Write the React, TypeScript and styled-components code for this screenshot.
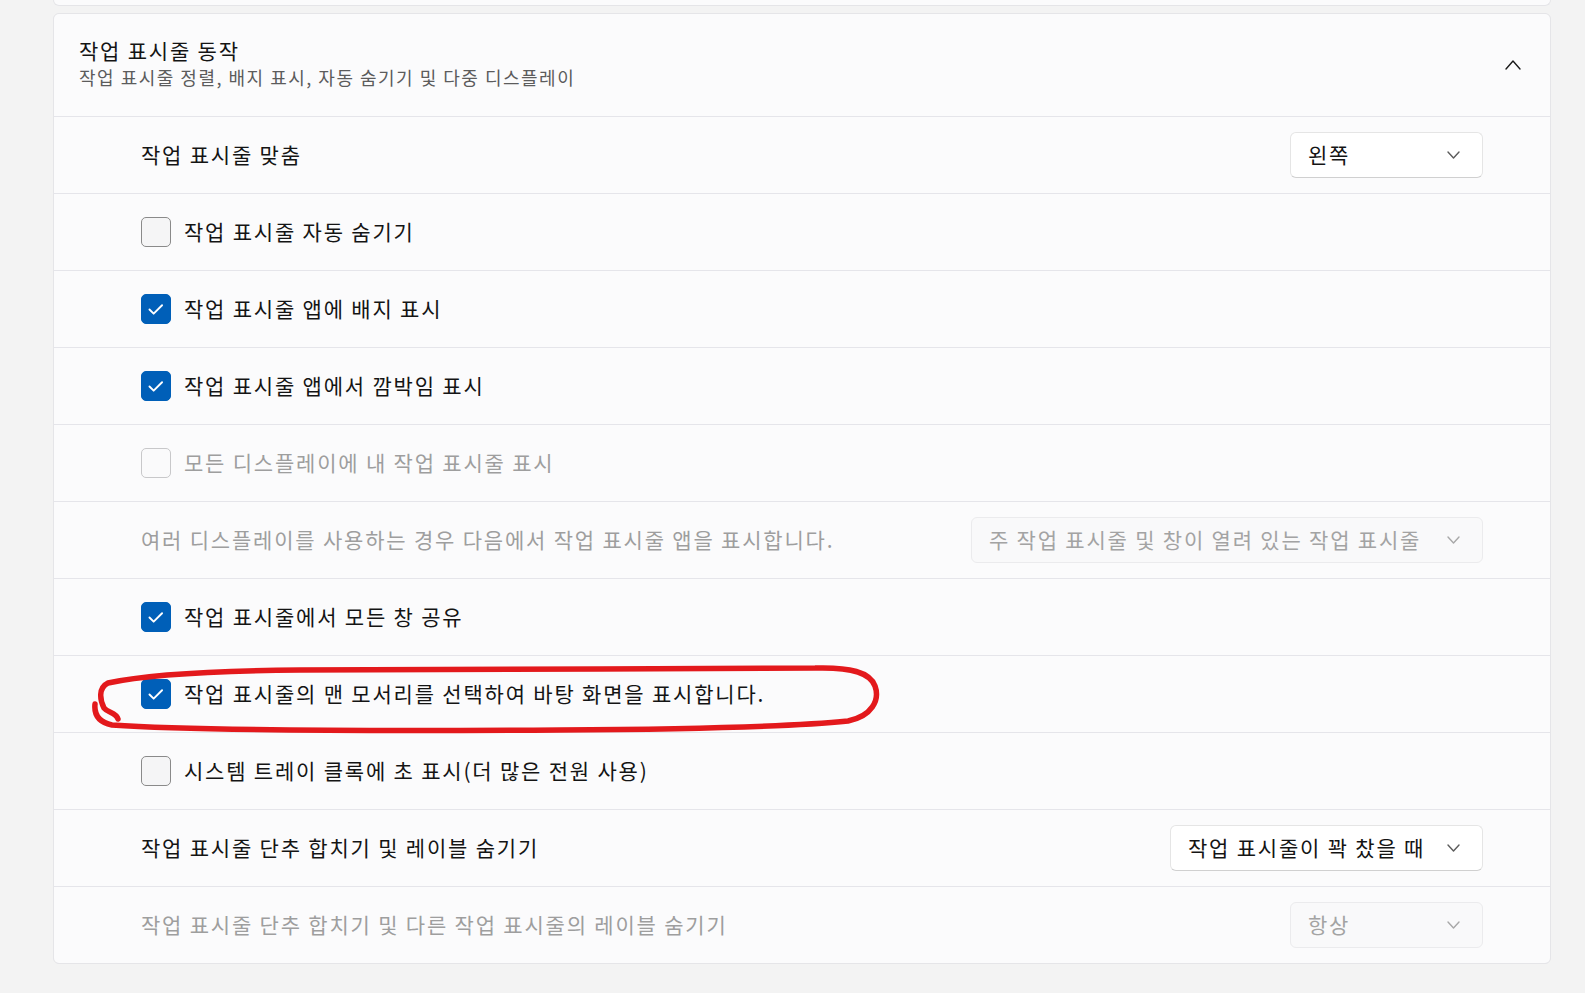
import React from "react";
import styled, { createGlobalStyle } from "styled-components";

const GlobalStyle = createGlobalStyle`
  body {
    margin: 0;
    background: #f3f3f3;
    font-family: "Noto Sans CJK KR", "Noto Sans", sans-serif;
    color: #141414;
  }
`;

const Page = styled.div`
  position: relative;
  height: 993px;
  overflow: hidden;
  padding: 0 34px 0 53px;
  box-sizing: border-box;
  display: flex;
  flex-direction: column;
`;

// bottom edge of the card scrolled up above
const PrevCard = styled.div`
  height: 5px;
  border: 1px solid #e5e5e8;
  border-top: none;
  border-radius: 0 0 6px 6px;
  background: #fbfbfc;
`;

const Card = styled.div`
  margin-top: 7px;
  border: 1px solid #e5e5e8;
  border-radius: 6px;
  background: #e5e5ea;
  display: flex;
  flex-direction: column;
  gap: 1px;
  overflow: hidden;
`;

const Header = styled.div`
  height: 102px;
  display: flex;
  align-items: center;
  justify-content: space-between;
  padding: 0 29px 0 25px;
  background: #fbfbfc;
`;

const HeaderText = styled.div`
  display: flex;
  flex-direction: column;
  margin-bottom: 4px;
`;

const Title = styled.div`
  font-size: 21px;
  line-height: 28px;
  letter-spacing: 1.8px;
  color: #141414;
`;

const Subtitle = styled.div`
  font-size: 18px;
  line-height: 26px;
  letter-spacing: 1.5px;
  color: #5c5c5c;
`;

const Row = styled.div`
  height: 76px;
  display: flex;
  align-items: center;
  justify-content: space-between;
  padding: 0 67px 0 87px;
  background: #fbfbfc;
`;

const LabelGroup = styled.div`
  display: flex;
  align-items: center;
  gap: 13px;
`;

const Label = styled.span<{ $disabled?: boolean }>`
  font-size: 21px;
  line-height: 30px;
  letter-spacing: 1.8px;
  margin-bottom: 3px;
  color: ${(p) => (p.$disabled ? "#9e9e9e" : "#141414")};
  white-space: nowrap;
`;

const Box = styled.span<{ $checked?: boolean; $disabled?: boolean }>`
  width: 30px;
  height: 30px;
  box-sizing: border-box;
  border-radius: 5px;
  display: flex;
  align-items: center;
  justify-content: center;
  background: ${(p) => (p.$checked ? "#005fb8" : p.$disabled ? "#fafafb" : "#f5f5f6")};
  border: 1px solid
    ${(p) => (p.$checked ? "#005fb8" : p.$disabled ? "#c8c8ca" : "#8a8a8a")};
`;

const Select = styled.div<{ $width: number; $disabled?: boolean }>`
  width: ${(p) => p.$width}px;
  height: 46px;
  box-sizing: border-box;
  display: flex;
  align-items: center;
  justify-content: space-between;
  padding: 0 22px 0 17px;
  border-radius: 6px;
  border: 1px solid ${(p) => (p.$disabled ? "#ebebed" : "#e5e5e5")};
  border-bottom-color: ${(p) => (p.$disabled ? "#ebebed" : "#d0d0d0")};
  background: ${(p) => (p.$disabled ? "#f9f9fa" : "#ffffff")};
  font-size: 21px;
  letter-spacing: 1.8px;
  color: ${(p) => (p.$disabled ? "#a3a3a3" : "#141414")};
  white-space: nowrap;

  span {
    margin-bottom: 3px;
  }
`;

const Annotation = styled.svg`
  position: absolute;
  left: 0;
  top: 0;
  pointer-events: none;
`;

const Chevron = ({ up, color, w, h }: { up?: boolean; color: string; w: number; h: number }) => (
  <svg width={w} height={h + 2} viewBox={`0 0 ${w} ${h + 2}`}>
    <polyline
      points={up ? `1,${h + 1} ${w / 2},1 ${w - 1},${h + 1}` : `1,1 ${w / 2},${h + 1} ${w - 1},1`}
      fill="none"
      stroke={color}
      strokeWidth={1.4}
      strokeLinecap="round"
      strokeLinejoin="round"
    />
  </svg>
);

const Checkbox = ({ checked, disabled }: { checked?: boolean; disabled?: boolean }) => (
  <Box $checked={checked} $disabled={disabled}>
    {checked && (
      <svg width="30" height="30" viewBox="0 0 30 30">
        <polyline
          points="8,15.5 12.5,20 21.5,11"
          fill="none"
          stroke="#ffffff"
          strokeWidth={2}
          strokeLinecap="round"
          strokeLinejoin="round"
        />
      </svg>
    )}
  </Box>
);

const Dropdown = ({ value, width, disabled }: { value: string; width: number; disabled?: boolean }) => (
  <Select $width={width} $disabled={disabled}>
    <span>{value}</span>
    <Chevron color={disabled ? "#a8a8a8" : "#5c5c5c"} w={13} h={6} />
  </Select>
);

interface Setting {
  label: string;
  check?: boolean;
  checked?: boolean;
  disabled?: boolean;
  select?: { value: string; width: number };
}

const settings: Setting[] = [
  { label: "작업 표시줄 맞춤", select: { value: "왼쪽", width: 193 } },
  { label: "작업 표시줄 자동 숨기기", check: true },
  { label: "작업 표시줄 앱에 배지 표시", check: true, checked: true },
  { label: "작업 표시줄 앱에서 깜박임 표시", check: true, checked: true },
  { label: "모든 디스플레이에 내 작업 표시줄 표시", check: true, disabled: true },
  {
    label: "여러 디스플레이를 사용하는 경우 다음에서 작업 표시줄 앱을 표시합니다.",
    disabled: true,
    select: { value: "주 작업 표시줄 및 창이 열려 있는 작업 표시줄", width: 512 },
  },
  { label: "작업 표시줄에서 모든 창 공유", check: true, checked: true },
  { label: "작업 표시줄의 맨 모서리를 선택하여 바탕 화면을 표시합니다.", check: true, checked: true },
  { label: "시스템 트레이 클록에 초 표시(더 많은 전원 사용)", check: true },
  { label: "작업 표시줄 단추 합치기 및 레이블 숨기기", select: { value: "작업 표시줄이 꽉 찼을 때", width: 313 } },
  {
    label: "작업 표시줄 단추 합치기 및 다른 작업 표시줄의 레이블 숨기기",
    disabled: true,
    select: { value: "항상", width: 193 },
  },
];

const App = () => {
  return (
    <>
      <GlobalStyle />
      <Page>
        <PrevCard />
        <Card>
          <Header>
            <HeaderText>
              <Title>작업 표시줄 동작</Title>
              <Subtitle>작업 표시줄 정렬, 배지 표시, 자동 숨기기 및 다중 디스플레이</Subtitle>
            </HeaderText>
            <Chevron up color="#1a1a1a" w={16} h={8} />
          </Header>
          {settings.map((s) => (
            <Row key={s.label}>
              <LabelGroup>
                {s.check && <Checkbox checked={s.checked} disabled={s.disabled} />}
                <Label $disabled={s.disabled}>{s.label}</Label>
              </LabelGroup>
              {s.select && <Dropdown value={s.select.value} width={s.select.width} disabled={s.disabled} />}
            </Row>
          ))}
        </Card>
        {/* red marker circled over the screenshot */}
        <Annotation width="1585" height="993" viewBox="0 0 1585 993">
          <path
            d="M 95 704 C 94 714, 98 722, 112 725 C 200 731, 400 731, 560 730 C 700 729, 800 726, 848 721 C 872 716, 880 700, 875 686 C 870 672, 850 667, 815 668 C 650 670, 450 668, 300 670 C 200 671, 140 676, 108 683 C 98 688, 100 700, 104 708 C 108 713, 116 712, 118 719"
            fill="none"
            stroke="#e3191c"
            strokeWidth={5.5}
            strokeLinecap="round"
            strokeLinejoin="round"
          />
        </Annotation>
      </Page>
    </>
  );
};

export default App;
